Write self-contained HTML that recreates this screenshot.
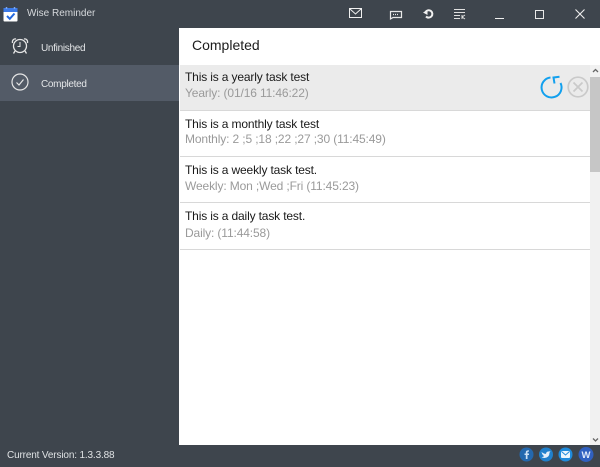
<!DOCTYPE html>
<html><head><meta charset="utf-8"><style>
html,body{margin:0;padding:0}
body{width:600px;height:467px;position:relative;overflow:hidden;background:#3e454d;font-family:"Liberation Sans",sans-serif}
.a{position:absolute;white-space:nowrap}
.t{font-size:12px;line-height:14px;color:#1a1a1a;left:185px;letter-spacing:-.15px}
.s{font-size:12px;line-height:14px;color:#9a9a9a;left:185px;letter-spacing:-.13px}
.n{font-size:10px;line-height:12px;color:#e4e6e8;left:41px;letter-spacing:-.3px}
.l{position:absolute;left:180px;width:410px;height:1px;background:#d8d8d8}
svg{position:absolute;overflow:visible}
</style></head><body>
<div class="a" style="left:0;top:65px;width:179px;height:36px;background:#535b67"></div>
<div class="a" style="left:179px;top:28px;width:421px;height:417px;background:#fff"></div>
<div class="a" style="left:180px;top:65px;width:410px;height:45px;background:#ebebeb"></div>
<div class="l" style="top:110px"></div><div class="l" style="top:156px"></div><div class="l" style="top:202px"></div><div class="l" style="top:249px"></div>
<div class="a" style="left:590px;top:65px;width:10px;height:380px;background:#f1f1f1"></div>
<div class="a" style="left:590px;top:77px;width:10px;height:95px;background:#c6c6c6"></div>
<svg style="left:591px;top:67px" width="9" height="8"><path d="M2 5L4.500 2.500L7 5" fill="none" stroke="#666" stroke-width="1.300"/></svg>
<svg style="left:591px;top:436px" width="9" height="8"><path d="M2 2.500L4.500 5L7 2.500" fill="none" stroke="#666" stroke-width="1.300"/></svg>

<svg style="left:3px;top:6px" width="16" height="16"><rect x=".5" y="2" width="14" height="13.500" rx="1" fill="#fff"/><rect x=".5" y="2" width="14" height="4" fill="#3d7be8"/><path d="M3.500 1V3M11.500 1V3" stroke="#7aa6f0" stroke-width="1.500"/><path d="M4 10L6.800 12.800L11.500 7.500" fill="none" stroke="#2368df" stroke-width="2"/></svg>
<div class="a" style="left:27px;top:8px;font-size:10px;line-height:12px;color:#d6d9dc">Wise Reminder</div>

<svg style="left:349px;top:8px" width="14" height="10"><rect x=".5" y=".5" width="12" height="9" fill="none" stroke="#f0f0f0"/><path d="M1 1L6.500 6L12 1" fill="none" stroke="#f0f0f0"/></svg>
<svg style="left:390px;top:10px" width="12" height="10"><path d="M.5 1.500H11.500V7.500H3L.5 9Z" fill="none" stroke="#e8e8e8" stroke-width="1.200"/><path d="M3 4.500H9" stroke="#e8e8e8" stroke-width="1.200" stroke-dasharray="1 1"/></svg>
<svg style="left:423px;top:8px" width="11" height="11"><path d="M2.500 4A3.700 3.700 0 1 1 3 8.500" fill="none" stroke="#f0f0f0" stroke-width="2"/><path d="M0 4.500L4.500 2V7Z" fill="#f0f0f0"/></svg>
<svg style="left:454px;top:9px" width="12" height="11"><path d="M0 .5H11M0 3.500H11M0 6.500H6M0 9.500H6" stroke="#e0e0e0"/><path d="M8 6V10M8 8L11 6M8 8L11 10" fill="none" stroke="#e0e0e0"/></svg>
<div class="a" style="left:495px;top:18px;width:9px;height:1px;background:#f0f0f0"></div>
<div class="a" style="left:535px;top:10px;width:7px;height:7px;border:1.500px solid #e8e8e8"></div>
<svg style="left:575px;top:9px" width="10" height="10"><path d="M.5.500L9.500 9.500M9.500.500L.5 9.500" stroke="#eee" stroke-width="1.100"/></svg>

<svg style="left:11px;top:37px" width="18" height="19" fill="none" stroke="#e6e6e6"><circle cx="9" cy="9" r="6.500" stroke-width="1.300"/><path d="M9 5V9.500H6.500"/><path d="M1.500 6C1 3 3 1.500 5 2M16.500 6C17 3 15 1.500 13 2M4 14L2.500 16.500M14 14L15.500 16.500" stroke-width="1.300"/></svg>
<div class="a n" style="top:43px">Unfinished</div>
<svg style="left:11px;top:73px" width="18" height="18" fill="none" stroke="#e6e6e6"><circle cx="9" cy="9" r="8" stroke-width="1.200"/><path d="M5.500 9.500L8 12L12.500 6.500" stroke-width="1.200"/></svg>
<div class="a n" style="top:79px">Completed</div>

<div class="a" style="left:192px;top:37px;font-size:14px;line-height:17px;color:#1c1c1c">Completed</div>
<div class="a t" style="top:70px">This is a yearly task test</div>
<div class="a s" style="top:86px">Yearly: (01/16 11:46:22)</div>
<div class="a t" style="top:117px">This is a monthly task test</div>
<div class="a s" style="top:132px">Monthly: 2 ;5 ;18 ;22 ;27 ;30 (11:45:49)</div>
<div class="a t" style="top:163px">This is a weekly task test.</div>
<div class="a s" style="top:179px">Weekly: Mon ;Wed ;Fri (11:45:23)</div>
<div class="a t" style="top:209px">This is a daily task test.</div>
<div class="a s" style="top:226px">Daily: (11:44:58)</div>

<svg style="left:541px;top:76px" width="23" height="24" fill="none" stroke="#12a0ee" stroke-width="2"><path d="M9.500 1.500A10 10 0 1 0 19.500 7"/><path d="M18.500 .8L12.500 1.500L13.500 7.500"/></svg>
<svg style="left:567px;top:76px" width="22" height="22" fill="none" stroke="#cacaca" stroke-width="1.700"><circle cx="11" cy="11" r="9.800"/><path d="M6.500 6.500L15.500 15.500M15.500 6.500L6.500 15.500"/></svg>

<div class="a" style="left:7px;top:450px;font-size:10px;line-height:12px;letter-spacing:-.15px;color:#dfe2e4">Current Version: 1.3.3.88</div>
<svg style="left:519px;top:447px" width="76" height="16">
<circle cx="7.500" cy="7.500" r="7" fill="#2468ae"/><circle cx="27" cy="7.500" r="7" fill="#2080cc"/><circle cx="46.500" cy="7.500" r="7" fill="#1f8bdc"/><circle cx="67" cy="7.500" r="7.500" fill="#3060c0"/>
<path d="M8.500 12V8H10V6.500H8.500V5.300Q8.500 4.500 10 4.600V3.400Q6.800 3 6.800 5.300V6.500H5.500V8H6.800V12Z" fill="#cfe2f5"/>
<path d="M22.500 5Q25 7 27 6.800Q27.300 4.500 29.500 4.500L31.500 4.300L30.500 5.800Q30.500 10.500 25.500 11Q23.500 11 22.500 10Q24.500 10 25 9Q23 7.500 22.500 5Z" fill="#e3f0fb"/>
<rect x="42" y="4" width="9" height="7" rx="1" fill="#eaf5fd"/><path d="M42.500 4.500L46.500 8L50.500 4.500" fill="none" stroke="#1f8bdc"/>
<text x="62.500" y="11" font-size="9.500" font-weight="bold" fill="#dfe8fa" font-family="Liberation Sans">W</text>
</svg>
</body></html>
